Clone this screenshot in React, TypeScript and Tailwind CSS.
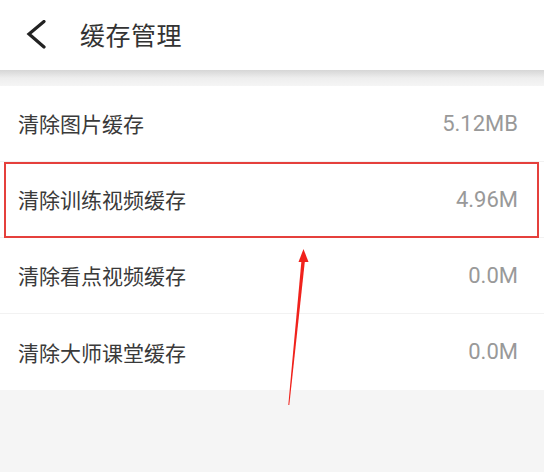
import React from "react";

const rows = [
  { label: "清除图片缓存", value: "5.12MB" },
  { label: "清除训练视频缓存", value: "4.96M", highlight: true },
  { label: "清除看点视频缓存", value: "0.0M" },
  { label: "清除大师课堂缓存", value: "0.0M" },
];

export default function App() {
  return (
    <div
      className="relative w-[544px] h-[472px] bg-[#f5f5f5] overflow-hidden"
      style={{ fontFamily: '"Noto Sans CJK SC", "Noto Sans", sans-serif' }}
    >
      <header className="h-[70px] bg-white flex items-center">
        <div className="w-[80px] flex items-center pl-[26px]">
          <svg width="22" height="30" viewBox="0 0 22 30" className="block">
            <path d="M18 1.5 L3 14 L18 27" fill="none" stroke="#222" strokeWidth="3.2" strokeLinecap="round" strokeLinejoin="miter" />
          </svg>
        </div>
        <h1 className="text-[25px] leading-none text-[#333] tracking-[0.5px] -mt-[2px]">缓存管理</h1>
      </header>
      <div className="h-[16px] bg-gradient-to-b from-[#d6d6d6] via-[#eeeeee] to-[#f5f5f5]" />
      <div className="bg-white">
        {rows.map((r, i) => (
          <div
            key={i}
            className={`relative h-[76px] flex items-center justify-between pl-[18px] pr-[26px] ${
              i < rows.length - 1 ? "border-b border-[#f2f2f2]" : ""
            }`}
          >
            <span className="text-[21px] text-[#3a3a3a] leading-none">{r.label}</span>
            <span
              className="text-[22px] text-[#999999] leading-none"
              style={{ fontFamily: 'Roboto, "Noto Sans", sans-serif' }}
            >
              {r.value}
            </span>
            {r.highlight && (
              <div className="absolute left-[4px] right-[5px] top-[0px] bottom-[-1px] border-2 border-[#e5403c] pointer-events-none" />
            )}
          </div>
        ))}
      </div>
      <svg
        className="absolute left-0 top-0 pointer-events-none"
        width="544"
        height="472"
        viewBox="0 0 544 472"
      >
        <path d="M301.5 260 L288.3 405 L289.3 405 L305 260 Z" fill="#f0221c" />
        <path d="M303.5 249 L298.5 262 L308.5 262 Z" fill="#f0221c" />
      </svg>
    </div>
  );
}
